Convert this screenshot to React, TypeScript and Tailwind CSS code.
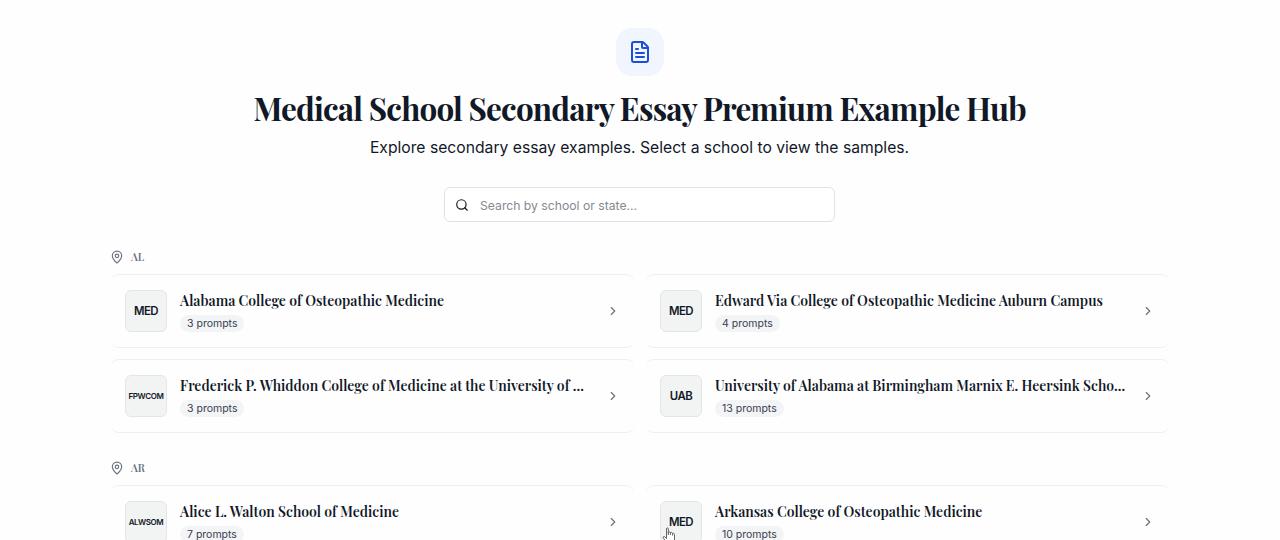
import {ChevronRight, FileText, MapPin, Search} from "lucide-react";

type School = {
  name: string;
  badge: string;
  prompts: number;
};

const states: {code: string; schools: School[]}[] = [
  {
    code: "AL",
    schools: [
      {name: "Alabama College of Osteopathic Medicine", badge: "MED", prompts: 3},
      {name: "Edward Via College of Osteopathic Medicine Auburn Campus", badge: "MED", prompts: 4},
      {name: "Frederick P. Whiddon College of Medicine at the University of ...", badge: "FPWCOM", prompts: 3},
      {name: "University of Alabama at Birmingham Marnix E. Heersink Scho...", badge: "UAB", prompts: 13},
    ],
  },
  {
    code: "AR",
    schools: [
      {name: "Alice L. Walton School of Medicine", badge: "ALWSOM", prompts: 7},
      {name: "Arkansas College of Osteopathic Medicine", badge: "MED", prompts: 10},
    ],
  },
];

export default function App() {
  return (
    <main className="relative h-[540px] overflow-hidden bg-[#fefefe] font-['Inter',sans-serif] text-[#111827]">
      <header className="flex flex-col items-center pt-7">
        <div className="flex size-12 items-center justify-center rounded-2xl bg-[#f1f5fe]">
          <FileText className="size-6 text-[#1d4ed8]" strokeWidth={2} />
        </div>
        <h1 className="mr-px mt-3 h-10 whitespace-nowrap font-['Playfair_Display','Liberation_Serif',serif] text-[31.4px] font-bold leading-10 tracking-tight">
          Medical School Secondary Essay Premium Example Hub
        </h1>
        <p className="mr-px mt-2 h-6 whitespace-nowrap text-[15.7px] leading-6">
          Explore secondary essay examples. Select a school to view the samples.
        </p>
        <label className="mr-px mt-[27px] flex h-[35px] w-[391px] items-center gap-[11px] rounded-md border border-[#dfe2e5] bg-white pl-[10px]">
          <Search className="size-[14px]" strokeWidth={2} />
          <input
            className="w-72 pt-[3px] text-[12.2px] outline-none placeholder:text-[#858991]"
            placeholder="Search by school or state..."
          />
        </label>
      </header>
      <div className="mx-auto mt-7 flex w-[1058px] flex-col gap-7">
        {states.map((state) => (
          <section key={state.code}>
            <h2 className="flex h-[14px] items-center gap-[7px] font-['Playfair_Display','Liberation_Serif',serif] text-[10.5px] font-semibold text-[#6b7280]">
              <MapPin className="-ml-px size-[14px]" strokeWidth={2} />
              <span className="pt-[2px]">{state.code}</span>
            </h2>
            <div className="mt-[10px] grid grid-cols-2 gap-x-3 gap-y-[11px]">
              {state.schools.map((school) => (
                <SchoolCard key={school.name} school={school} />
              ))}
            </div>
          </section>
        ))}
      </div>
      <HandCursor />
    </main>
  );
}

function SchoolCard({school}: {school: School}) {
  return (
    <a className="flex h-[74px] items-center rounded-lg border-y border-[#eeeff0] px-[13px]">
      <span
        className={`ml-px flex size-[42px] shrink-0 items-center justify-center rounded-md border border-[#e4e5e5] bg-[#f2f3f3] font-semibold ${
          school.badge.length > 3 ? "text-[8px] tracking-[-0.4px]" : "pt-[2px] text-[11.4px] tracking-[-0.5px]"
        }`}
      >
        {school.badge}
      </span>
      <div className="ml-[13px] flex min-w-0 flex-1 flex-col items-start gap-[5px] pt-[2px]">
        <h3 className="h-[18px] whitespace-nowrap font-['Playfair_Display','Liberation_Serif',serif] text-[13.96px] font-semibold leading-[18px]">
          {school.name}
        </h3>
        <span className="flex h-[17px] items-center rounded-full bg-[#f3f4f6] px-[7px] text-[10.5px] text-[#374151]">
          {school.prompts} prompts
        </span>
      </div>
      <ChevronRight className="mr-px size-[14px] shrink-0 text-[#6b7280]" strokeWidth={2} />
    </a>
  );
}

function HandCursor() {
  return (
    <svg className="absolute left-[662px] top-[527px] h-[18px] w-[14px]" viewBox="0 0 14 18">
      <path
        d="M4.500 10V2c0-1.500 1.800-1.500 1.800 0v4.500M6.300 8V5.500c.2-1 2-1 2.100.3V8m0-2c.3-1 2-.8 2.100.5V8.500m0-1.800c.4-.8 2-.6 2 .7V13c0 3-1.500 4-4 4-3 0-4-1.500-5-3.500L1.200 11c-.7-1.400.8-2 1.800-1l1.500 1.500V9"
        fill="#fff"
        stroke="#555"
        strokeWidth="0.9"
      />
    </svg>
  );
}
